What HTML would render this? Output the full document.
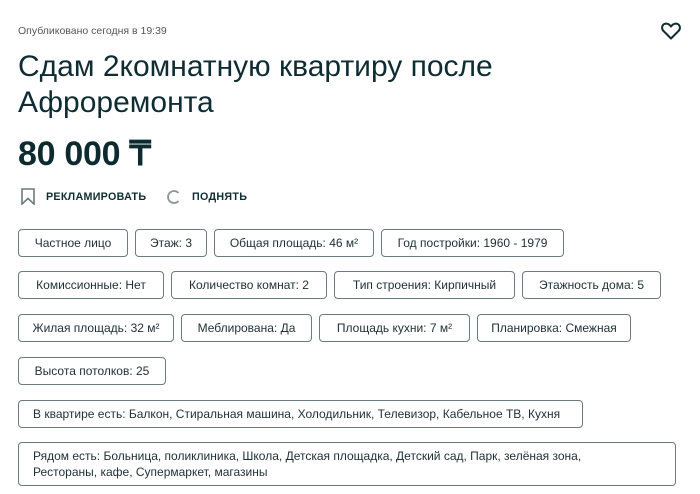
<!DOCTYPE html>
<html><head><meta charset="utf-8">
<style>
*{margin:0;padding:0;box-sizing:border-box}
body{width:700px;height:494px;background:#fff;font-family:"Liberation Sans","Noto Sans CJK SC",sans-serif;color:#0f2c33;position:relative;overflow:hidden}
.a{position:absolute;white-space:nowrap}
.pub{left:18px;top:25px;font-size:10.5px;color:#555}
.t{left:18px;font-size:30px;line-height:34px}
.price{left:18px;top:134px;font-size:34px;font-weight:bold;color:#0d2a30;letter-spacing:-0.3px}
.act{font-size:10.7px;font-weight:bold;letter-spacing:.3px;top:191px}
.c{position:absolute;height:28px;border:1px solid #6b7b80;border-radius:4px;font-size:12px;line-height:26px;text-align:center;color:#1e2f33;white-space:nowrap}
.c.l{text-align:left;padding-left:14px}
</style></head><body>
<div class="a pub">Опубликовано сегодня в 19:39</div>
<svg class="a" style="left:661px;top:22px" width="20" height="18" viewBox="0 0 20 18"><path d="M10 16.5 L2.5 9 C0 6.5 1 2 4.8 1.6 C7 1.4 8.8 2.8 10 4.5 C11.2 2.8 13 1.4 15.2 1.6 C19 2 20 6.5 17.5 9 Z" fill="none" stroke="#0f2c33" stroke-width="2" stroke-linejoin="round"/></svg>
<div class="a t" style="top:50px">Сдам 2комнатную квартиру после</div>
<div class="a t" style="top:86px">Афроремонта</div>
<div class="a price">80 000 ₸</div>
<svg class="a" style="left:21px;top:188px" width="14" height="17" viewBox="0 0 14 17"><path d="M1 1 H13 V16 L7 10.5 L1 16 Z" fill="none" stroke="#6b7b80" stroke-width="1.6"/></svg>
<div class="a act" style="left:46px">РЕКЛАМИРОВАТЬ</div>
<svg class="a" style="left:166px;top:189px" width="16" height="16" viewBox="0 0 16 16"><path d="M12.5 4 A6 6 0 1 0 12.5 12" fill="none" stroke="#8a979b" stroke-width="1.8"/></svg>
<div class="a act" style="left:192px">ПОДНЯТЬ</div>

<div class="c" style="left:18px;top:229px;width:110px">Частное лицо</div>
<div class="c" style="left:135px;top:229px;width:72px">Этаж: 3</div>
<div class="c" style="left:214px;top:229px;width:160px">Общая площадь: 46 м²</div>
<div class="c" style="left:381px;top:229px;width:183px">Год постройки: 1960 - 1979</div>

<div class="c" style="left:18px;top:271px;width:146px">Комиссионные: Нет</div>
<div class="c" style="left:171px;top:271px;width:156px">Количество комнат: 2</div>
<div class="c" style="left:334px;top:271px;width:181px">Тип строения: Кирпичный</div>
<div class="c" style="left:522px;top:271px;width:139px">Этажность дома: 5</div>

<div class="c" style="left:18px;top:314px;width:156px">Жилая площадь: 32 м²</div>
<div class="c" style="left:181px;top:314px;width:131px">Меблирована: Да</div>
<div class="c" style="left:319px;top:314px;width:151px">Площадь кухни: 7 м²</div>
<div class="c" style="left:477px;top:314px;width:154px">Планировка: Смежная</div>

<div class="c" style="left:18px;top:357px;width:148px">Высота потолков: 25</div>

<div class="c l" style="left:18px;top:400px;width:565px">В квартире есть: Балкон, Стиральная машина, Холодильник, Телевизор, Кабельное ТВ, Кухня</div>

<div class="c l" style="left:18px;top:442px;width:658px;height:44px;line-height:16px;padding-top:5px">Рядом есть: Больница, поликлиника, Школа, Детская площадка, Детский сад, Парк, зелёная зона,<br>Рестораны, кафе, Супермаркет, магазины</div>
</body></html>
